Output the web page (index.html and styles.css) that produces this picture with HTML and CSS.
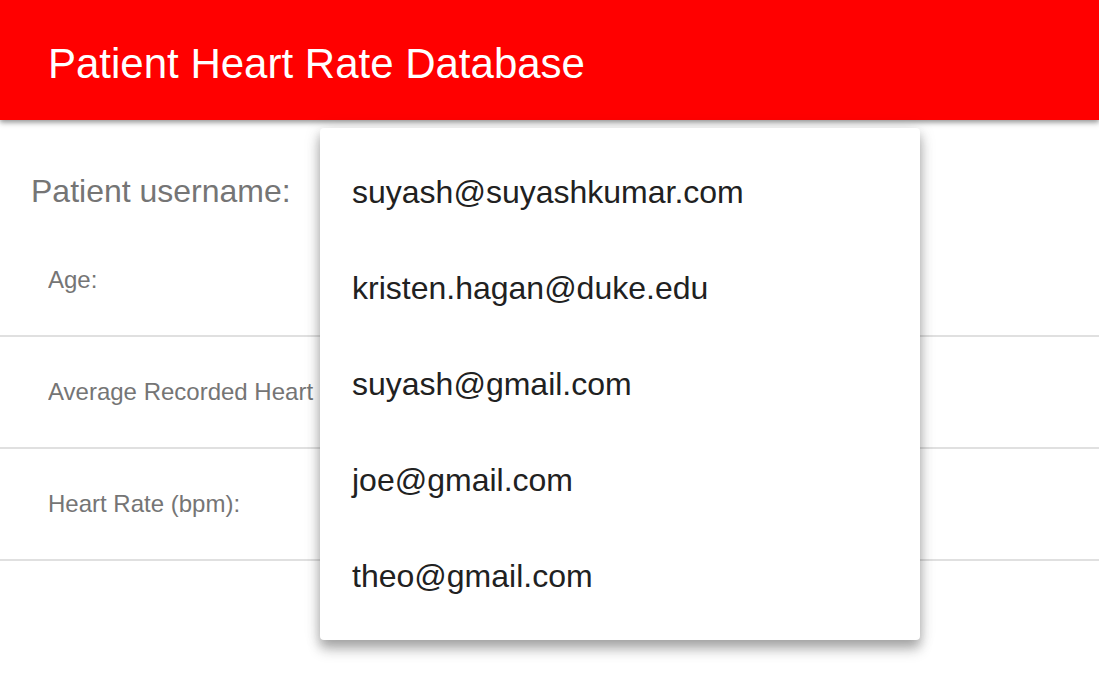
FILE: index.html
```html
<!DOCTYPE html>
<html>
<head>
<meta charset="utf-8">
<link rel="stylesheet" href="styles.css">
</head>
<body>
<header class="appbar">
  <h1 class="title">Patient Heart Rate Database</h1>
</header>
<main class="content">
  <div class="username-row">
    <span class="username-label">Patient username:</span>
  </div>
  <div class="table">
    <div class="row"><span class="cell">Age:</span></div>
    <div class="row"><span class="cell">Average Recorded Heart Rate (bpm):</span></div>
    <div class="row"><span class="cell">Heart Rate (bpm):</span></div>
  </div>
</main>
<ul class="menu">
  <li class="menu-item">suyash@suyashkumar.com</li>
  <li class="menu-item">kristen.hagan@duke.edu</li>
  <li class="menu-item">suyash@gmail.com</li>
  <li class="menu-item">joe@gmail.com</li>
  <li class="menu-item">theo@gmail.com</li>
</ul>
</body>
</html>
```

FILE: styles.css
```css
* { box-sizing: border-box; }
html, body {
  margin: 0;
  padding: 0;
  background: #fff;
  font-family: "Liberation Sans", Arial, sans-serif;
  overflow: hidden;
}
.appbar {
  height: 120px;
  background: #ff0000;
  display: flex;
  align-items: center;
  padding-left: 48px;
  padding-top: 8px;
  box-shadow: 0 3px 6px rgba(0,0,0,0.25), 0 2px 4px rgba(0,0,0,0.2);
  position: relative;
  z-index: 1;
}
.title {
  margin: 0;
  color: #fff;
  font-weight: 400;
  font-size: 42px;
  line-height: 1;
}
.content {
  padding-top: 53px;
}
.username-row {
  padding-left: 31px;
  height: 52px;
  line-height: 36px;
}
.username-label {
  font-size: 32px;
  color: #757575;
}
.row {
  height: 112px;
  border-bottom: 2px solid #e0e0e0;
  display: flex;
  align-items: center;
  padding-left: 48px;
  white-space: nowrap;
}
.cell {
  font-size: 24px;
  color: #757575;
  max-width: 270px;
  overflow: hidden;
}
.menu {
  position: absolute;
  left: 320px;
  top: 128px;
  width: 600px;
  margin: 0;
  padding: 16px 0;
  list-style: none;
  background: #fff;
  border-radius: 4px;
  box-shadow: 0 10px 14px rgba(0,0,0,0.2), 0 6px 10px rgba(0,0,0,0.14), 0 2px 18px rgba(0,0,0,0.12);
  z-index: 2;
}
.menu-item {
  height: 96px;
  display: flex;
  align-items: center;
  padding-left: 32px;
  font-size: 32px;
  color: #212121;
}
```
